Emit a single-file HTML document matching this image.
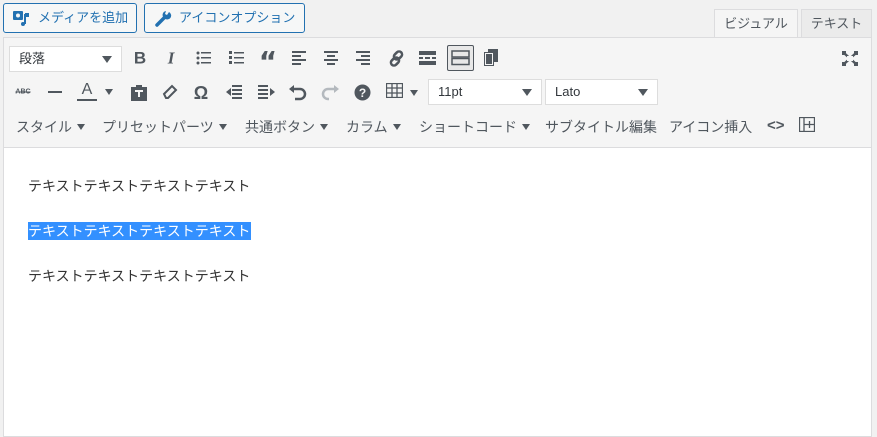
<!DOCTYPE html>
<html><head><meta charset="utf-8"><style>
*{margin:0;padding:0;box-sizing:border-box}
body{width:877px;height:431px;background:#f1f1f1;font-family:"Liberation Sans","Noto Sans CJK JP",sans-serif;position:relative;overflow:hidden;color:#50575e}
.a{position:absolute}
.btn{position:absolute;top:3px;height:30px;border:1px solid #2271b1;border-radius:3px;background:#f6f7f7;color:#2271b1;font-size:13px;line-height:28px;padding-left:34px}
.tab{position:absolute;top:9px;height:29px;font-size:13px;line-height:28px;text-align:center;color:#50575e;border:1px solid #dcdcde;border-bottom:none}
.ed{position:absolute;left:3px;top:37px;width:869px;height:400px;border:1px solid #dcdcde;background:#fff}
.tb{position:absolute;left:0;top:0;width:867px;height:110px;background:#f5f5f5;border-bottom:1px solid #dcdcde}
.ic{position:absolute;font-size:15px;font-weight:bold;color:#50575e;transform:translate(-50%,-50%);line-height:1}
.sel{position:absolute;height:26px;background:#fff;border:1px solid #ddd;font-size:13px;line-height:24px;padding-left:9px;color:#32373c}
.sel:after{content:"";position:absolute;right:9px;top:9px;border:5px solid transparent;border-top:7px solid #50575e;border-bottom:0}
.m{position:absolute;top:117px;font-size:14px;color:#50575e;white-space:nowrap}
.tri{display:inline-block;border:4.5px solid transparent;border-top:6px solid #50575e;border-bottom:0;margin-left:5px;vertical-align:2px}
.t{position:absolute;left:25px;font-size:14px;color:#333;white-space:nowrap;line-height:18px}
</style></head><body>
<div class="btn" style="left:3px;width:134px">メディアを追加</div>
<svg class="a" style="left:13px;top:10px" width="17" height="17" viewBox="0 0 17 17"><rect x="0" y="1" width="10" height="9" rx="1" fill="#2271b1"/><circle cx="5" cy="5.5" r="2" fill="#f6f7f7"/><path d="M12 4v10M12 4h3v2h-3" stroke="#2271b1" stroke-width="2" fill="none"/><circle cx="10" cy="14" r="2" fill="#2271b1"/></svg>
<div class="btn" style="left:144px;width:161px">アイコンオプション</div>
<svg class="a" style="left:155px;top:10px" width="17" height="17" viewBox="0 0 17 17"><path d="M2 15l7-7" stroke="#2271b1" stroke-width="3.5" stroke-linecap="round"/><path d="M9 8a4 4 0 1 0 5-6l-2 3-2-1 1-3a4 4 0 0 0-2 7z" fill="#2271b1"/></svg>
<div class="tab" style="left:714px;width:84px;background:#f5f5f5;height:30px">ビジュアル</div>
<div class="tab" style="left:801px;width:71px;background:#ebebeb">テキスト</div>
<div class="ed">
<div class="tb"></div>
</div>
<!-- row1 -->
<div class="sel" style="left:9px;top:46px;width:113px">段落</div>
<div class="ic" style="left:140px;top:58px;font-size:17px">B</div>
<div class="ic" style="left:171px;top:58px;font-size:17px;font-family:'Liberation Serif',serif;font-style:italic">I</div>
<svg class="a" style="left:196px;top:51px" width="16" height="14"><g fill="#50575e"><circle cx="2" cy="2" r="1.5"/><circle cx="2" cy="7" r="1.5"/><circle cx="2" cy="12" r="1.5"/><rect x="5" y="1" width="10" height="1.5"/><rect x="5" y="6" width="10" height="1.5"/><rect x="5" y="11" width="10" height="1.5"/></g></svg>
<svg class="a" style="left:229px;top:51px" width="16" height="14"><g fill="#50575e"><rect x="0" y="0" width="3" height="3"/><rect x="0" y="5" width="3" height="3"/><rect x="0" y="10" width="3" height="3"/><rect x="5" y="1" width="10" height="1.5"/><rect x="5" y="6" width="10" height="1.5"/><rect x="5" y="11" width="10" height="1.5"/></g></svg>
<div class="ic" style="left:268px;top:62px;font-size:28px;font-family:'DejaVu Sans',serif">“</div>
<svg class="a" style="left:292px;top:51px" width="15" height="14"><g fill="#50575e"><rect y="0" width="14" height="2"/><rect y="4" width="9" height="2"/><rect y="8" width="14" height="2"/><rect y="12" width="9" height="2"/></g></svg>
<svg class="a" style="left:324px;top:51px" width="15" height="14"><g fill="#50575e"><rect y="0" width="14" height="2"/><rect x="3" y="4" width="8" height="2"/><rect y="8" width="14" height="2"/><rect x="3" y="12" width="8" height="2"/></g></svg>
<svg class="a" style="left:356px;top:51px" width="15" height="14"><g fill="#50575e"><rect y="0" width="14" height="2"/><rect x="5" y="4" width="9" height="2"/><rect y="8" width="14" height="2"/><rect x="5" y="12" width="9" height="2"/></g></svg>
<svg class="a" style="left:388px;top:50px" width="17" height="17"><g stroke="#50575e" stroke-width="2.5" fill="none"><rect x="7" y="1" width="6" height="9" rx="3" transform="rotate(45 10 5.5)"/><rect x="4" y="7" width="6" height="9" rx="3" transform="rotate(45 7 11.5)"/></g></svg>
<svg class="a" style="left:419px;top:51px" width="17" height="14"><g fill="#50575e"><rect width="17" height="4"/><rect y="6" width="4" height="2"/><rect x="6" y="6" width="5" height="2"/><rect x="13" y="6" width="4" height="2"/><rect y="10" width="17" height="4"/></g></svg>
<div class="a" style="left:447px;top:45px;width:27px;height:26px;border:1px solid #50575e;border-radius:2px;background:#e8e8e8"></div>
<svg class="a" style="left:451px;top:50px" width="19" height="16"><g fill="none" stroke="#50575e" stroke-width="1.5"><rect x="1" y="1" width="17" height="6"/><rect x="1" y="8.5" width="17" height="6"/></g></svg>
<svg class="a" style="left:484px;top:49px" width="14" height="17"><g fill="#50575e"><rect x="4" y="0" width="10" height="13"/><rect x="0" y="3" width="10" height="14"/></g><rect x="1.5" y="4.5" width="7" height="11" fill="#50575e" stroke="#f5f5f5" stroke-width="1"/></svg>
<svg class="a" style="left:842px;top:51px" width="16" height="15"><g stroke="#50575e" stroke-width="2.5"><path d="M2 2l12 11M14 2L2 13"/></g><g fill="#50575e"><rect x="0" y="0" width="4" height="4"/><rect x="12" y="0" width="4" height="4"/><rect x="0" y="11" width="4" height="4"/><rect x="12" y="11" width="4" height="4"/></g><rect x="5" y="5" width="6" height="5" fill="#f5f5f5"/></svg>
<!-- row2 -->
<div class="ic" style="left:23px;top:92px;font-size:7px;text-decoration:line-through">ABC</div>
<div class="a" style="left:48px;top:91px;width:14px;height:2px;background:#50575e"></div>
<div class="ic" style="left:87px;top:90px;font-size:16px;font-weight:normal">A</div>
<div class="a" style="left:77px;top:99px;width:20px;height:2px;background:#50575e"></div>
<div class="a" style="left:105px;top:89px;border:4.5px solid transparent;border-top:6px solid #50575e;border-bottom:0"></div>
<svg class="a" style="left:131px;top:84px" width="16" height="17"><path d="M0 3h5v-2h6v2h5v14H0z" fill="#50575e"/><rect x="4" y="6" width="8" height="2" fill="#f5f5f5"/><rect x="7" y="7" width="2" height="6" fill="#f5f5f5"/></svg>
<svg class="a" style="left:162px;top:84px" width="16" height="16"><path d="M2 10l8-8 4 4-8 8H4z" fill="none" stroke="#50575e" stroke-width="2"/></svg>
<div class="ic" style="left:201px;top:93px;font-size:18px">Ω</div>
<svg class="a" style="left:226px;top:85px" width="17" height="15"><g fill="#50575e"><rect x="6" y="0" width="10" height="2"/><rect x="6" y="4" width="10" height="2"/><rect x="6" y="8" width="10" height="2"/><rect x="6" y="12" width="10" height="2"/><path d="M0 7l5-4v8z"/></g></svg>
<svg class="a" style="left:258px;top:85px" width="17" height="15"><g fill="#50575e"><rect x="0" y="0" width="10" height="2"/><rect x="0" y="4" width="10" height="2"/><rect x="0" y="8" width="10" height="2"/><rect x="0" y="12" width="10" height="2"/><path d="M17 7l-5-4v8z"/></g></svg>
<svg class="a" style="left:289px;top:84px" width="18" height="17"><path d="M3 5h8a5 5 0 0 1 0 10H6" fill="none" stroke="#50575e" stroke-width="2.5"/><path d="M0 5l5-4v8z" fill="#50575e"/></svg>
<svg class="a" style="left:321px;top:84px" width="18" height="17"><path d="M15 5H7a5 5 0 0 0 0 10h1" fill="none" stroke="#b4b9be" stroke-width="2.5"/><path d="M18 5l-5-4v8z" fill="#b4b9be"/></svg>
<svg class="a" style="left:354px;top:84px" width="17" height="17"><circle cx="8.5" cy="8.5" r="8" fill="#50575e"/><text x="8.5" y="13" font-size="12" font-weight="bold" fill="#f5f5f5" text-anchor="middle" font-family="Liberation Sans">?</text></svg>
<svg class="a" style="left:386px;top:83px" width="17" height="15"><g fill="none" stroke="#50575e" stroke-width="1.3"><rect x=".5" y=".5" width="16" height="14"/><path d="M.5 5h16M.5 10h16M6 .5v14M11 .5v14"/></g></svg>
<div class="a" style="left:410px;top:90px;border:4.5px solid transparent;border-top:6px solid #50575e;border-bottom:0"></div>
<div class="sel" style="left:428px;top:79px;width:114px">11pt</div>
<div class="sel" style="left:545px;top:79px;width:113px">Lato</div>
<!-- row3 -->
<div class="m" style="left:16px">スタイル<span class="tri"></span></div>
<div class="m" style="left:102px">プリセットパーツ<span class="tri"></span></div>
<div class="m" style="left:245px">共通ボタン<span class="tri"></span></div>
<div class="m" style="left:346px">カラム<span class="tri"></span></div>
<div class="m" style="left:419px">ショートコード<span class="tri"></span></div>
<div class="m" style="left:545px">サブタイトル編集</div>
<div class="m" style="left:669px">アイコン挿入</div>
<div class="m" style="left:767px;font-weight:bold;font-size:15px">&lt;&gt;</div>
<svg class="a" style="left:799px;top:117px" width="16" height="15"><g fill="none" stroke="#50575e" stroke-width="1.3"><rect x=".5" y=".5" width="15" height="14"/><path d="M5 .5v14M5 7.5h10.5M10.5 4v7"/></g></svg>
<!-- content -->
<div class="t" style="top:177px;left:28px">テキストテキストテキストテキスト</div>
<div class="t" style="top:222px;left:28px;background:#3390ff;color:#fff;padding-right:1px">テキストテキストテキストテキスト</div>
<div class="t" style="top:267px;left:28px">テキストテキストテキストテキスト</div>
</body></html>
